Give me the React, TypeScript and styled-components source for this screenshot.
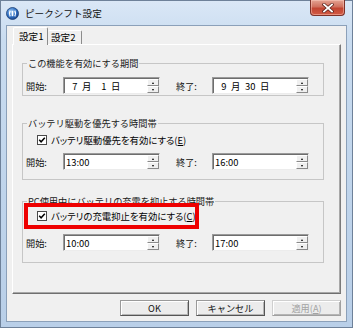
import styled, { createGlobalStyle } from "styled-components"

const GlobalStyle = createGlobalStyle`
  html, body {
    margin: 0;
    padding: 0;
    background: #ffffff;
  }
  body {
    font-family: "Noto Sans CJK JP", "Noto Sans", sans-serif;
    color: #000;
  }
`

/////////////////////////////////////////////////////////////////////////////

const TitleIcon = () => (
  <svg width="13" height="13" viewBox="0 0 13 13">
    <defs>
      <radialGradient id="ic" cx="40%" cy="35%" r="70%">
        <stop offset="0%" stopColor="#9cc8f4" />
        <stop offset="60%" stopColor="#2f6fc2" />
        <stop offset="100%" stopColor="#173f86" />
      </radialGradient>
    </defs>
    <circle cx="6.5" cy="6.5" r="6" fill="url(#ic)" stroke="#1d3f73" strokeWidth="0.8" />
    <path d="M4.2 3.6 Q2.6 6.5 4.2 9.4" stroke="#fff" strokeWidth="1.3" fill="none" />
    <path d="M8.8 3.6 Q10.4 6.5 8.8 9.4" stroke="#fff" strokeWidth="1.3" fill="none" />
    <rect x="5.7" y="3.8" width="1.6" height="5.4" fill="#fff" />
  </svg>
)

const CloseGlyph = () => (
  <svg width="12" height="10" viewBox="0 0 12 10">
    <path d="M2 1.5 L10 8.5 M10 1.5 L2 8.5" stroke="#5a2019" strokeWidth="3.2" strokeLinecap="square" />
    <path d="M2 1.5 L10 8.5 M10 1.5 L2 8.5" stroke="#ffffff" strokeWidth="1.8" strokeLinecap="square" />
  </svg>
)

const CheckGlyph = () => (
  <svg width="10" height="10" viewBox="0 0 10 10">
    <rect x="0.5" y="0.5" width="9" height="9" fill="#fff" stroke="#4a4a4a" />
    <path d="M2.2 4.8 L4.1 6.8 L7.8 2.8" stroke="#000" strokeWidth="1.5" fill="none" />
  </svg>
)

const Spin = ({ value, date }: { value: string; date?: boolean }) => (
  <SpinBox>
    <SpinValue $date={date}>{value}</SpinValue>
    <SpinButtons>
      <SpinButton>
        <Arrow $up />
      </SpinButton>
      <SpinButton>
        <Arrow />
      </SpinButton>
    </SpinButtons>
  </SpinBox>
)

const Period = ({ start, end, date }: { start: string; end: string; date?: boolean }) => (
  <FieldRow>
    <FieldLabel>開始:</FieldLabel>
    <Spin value={start} date={date} />
    <span />
    <FieldLabel>終了:</FieldLabel>
    <Spin value={end} date={date} />
  </FieldRow>
)

const FIG = "\u2007"

const App = () => {
  return (
    <>
      <GlobalStyle />
      <Window>
        <TitleBar>
          <TitleIcon />
          <TitleText>ピークシフト設定</TitleText>
          <CloseButton>
            <CloseGlyph />
          </CloseButton>
        </TitleBar>

        <Client>
          <TabStrip>
            <Tab $active>設定1</Tab>
            <Tab>設定2</Tab>
          </TabStrip>

          <Panel>
            <Group $top={0} $padTop={8} $padBottom={1}>
              <Legend>この機能を有効にする期間</Legend>
              <Period date start={`${FIG}7 月 ${FIG}1 日`} end={`${FIG}9 月 30 日`} />
            </Group>

            <Group $top={21} $padTop={5} $padBottom={9}>
              <Legend>バッテリ駆動を優先する時間帯</Legend>
              <CheckRow>
                <CheckGlyph />
                <span>
                  バッテリ駆動優先を有効にする(<u>E</u>)
                </span>
              </CheckRow>
              <Period start="13:00" end="16:00" />
            </Group>

            <Group $top={15} $padTop={3} $padBottom={11}>
              <Legend>PC使用中にバッテリの充電を抑止する時間帯</Legend>
              <CheckRow $gap={12}>
                <CheckGlyph />
                <span>
                  バッテリの充電抑止を有効にする(<u>C</u>)
                </span>
                <Highlight />
              </CheckRow>
              <Period start="10:00" end="17:00" />
            </Group>
          </Panel>

          <ButtonRow>
            <DialogButton>OK</DialogButton>
            <DialogButton>キャンセル</DialogButton>
            <DialogButton $disabled>
              適用(<u>A</u>)
            </DialogButton>
          </ButtonRow>
        </Client>
      </Window>
    </>
  )
}

/////////////////////////////////////////////////////////////////////////////

const Window = styled.div`
  width: 353px;
  height: 328px;
  box-sizing: border-box;
  display: flex;
  flex-direction: column;
  border: 1px solid #6e8199;
  padding: 0 5px 5px;
  background: linear-gradient(180deg, #dae7f6 0%, #c9dcf0 12%, #bfd4eb 60%, #b9cfe8 100%);
`

const TitleBar = styled.div`
  height: 24px;
  display: flex;
  align-items: center;
  gap: 6px;
`

const TitleText = styled.span`
  font-size: 9.6px;
  line-height: 12px;
  flex: 1;
  color: #111;
`

const CloseButton = styled.div`
  align-self: flex-start;
  width: 35px;
  height: 16px;
  margin-right: 2px;
  margin-top: -1px;
  box-sizing: border-box;
  display: flex;
  align-items: center;
  justify-content: center;
  border: 1px solid #7d3128;
  border-top: none;
  border-radius: 0 0 4px 4px;
  background: linear-gradient(180deg, #e4a493 0%, #d0705e 45%, #c24532 55%, #d35b44 100%);
  box-shadow: inset 0 0 0 1px rgba(255, 210, 200, 0.45);
`

const Client = styled.div`
  flex: 1;
  display: flex;
  flex-direction: column;
  background: #f0f0f0;
  border: 1px solid #8ba0b9;
  padding: 0 5px 5px 5px;
`

const TabStrip = styled.div`
  height: 18px;
  display: flex;
  align-items: flex-end;
  padding-left: 1px;
`

const Tab = styled.div<{ $active?: boolean }>`
  position: relative;
  z-index: ${({ $active }) => ($active ? 2 : 1)};
  box-sizing: border-box;
  height: ${({ $active }) => ($active ? "18px" : "14px")};
  width: ${({ $active }) => ($active ? "35px" : "34px")};
  margin-bottom: ${({ $active }) => ($active ? "-1px" : "0")};
  display: flex;
  align-items: ${({ $active }) => ($active ? "center" : "flex-start")};
  padding-left: ${({ $active }) => ($active ? "5px" : "3px")};
  padding-bottom: ${({ $active }) => ($active ? "1px" : "0")};
  font-size: 9.6px;
  line-height: 12px;
  background: #f0f0f0;
  border-top: 1px solid #ffffff;
  border-left: ${({ $active }) => ($active ? "1px solid #ffffff" : "none")};
  border-right: 1px solid #8c8c8c;
  border-radius: 2px 2px 0 0;
`

const Panel = styled.div`
  height: 250px;
  box-sizing: border-box;
  display: flex;
  flex-direction: column;
  padding: 12px 16px 0 9px;
  border: 1px solid;
  border-color: #ffffff #7a7a7a #6f6f6f #ffffff;
  box-shadow: inset -1px -1px 0 #a8a8a8;
`

const Group = styled.fieldset<{ $top: number; $padTop: number; $padBottom: number }>`
  margin: ${({ $top }) => $top}px 0 0 0;
  padding: ${({ $padTop }) => $padTop}px 0 ${({ $padBottom }) => $padBottom}px 0;
  border: 1px solid #c6c6c6;
  min-inline-size: 0;
  display: flex;
  flex-direction: column;
`

const Legend = styled.legend`
  font-size: 9.2px;
  line-height: 12px;
  padding: 0 1px;
  margin-left: 4px;
  color: #1a1a1a;
`

const CheckRow = styled.div<{ $gap?: number }>`
  position: relative;
  height: 12px;
  display: flex;
  align-items: center;
  gap: 4px;
  padding-left: 14px;
  margin-bottom: ${({ $gap }) => $gap ?? 7}px;
  font-size: 9.4px;
  line-height: 12px;
  white-space: nowrap;
  font-feature-settings: "palt";

  u {
    text-underline-offset: 1px;
  }
`

const Highlight = styled.span`
  position: absolute;
  left: 1px;
  top: -7px;
  width: 175px;
  height: 26px;
  box-sizing: border-box;
  border: 4px solid #ee0000;
  pointer-events: none;
`

const FieldRow = styled.div`
  display: grid;
  grid-template-columns: 37px 97px 16px 36px 97px;
  align-items: center;
  padding-left: 3px;
`

const FieldLabel = styled.span`
  font-size: 9.2px;
  line-height: 12px;
  color: #111;
`

const SpinBox = styled.div`
  height: 17px;
  box-sizing: border-box;
  display: flex;
  background: #ffffff;
  border: 1px solid;
  border-color: #9a9a9a #ececec #ececec #9a9a9a;
  box-shadow: inset 1px 1px 0 #6d6d6d;
`

const SpinValue = styled.span<{ $date?: boolean }>`
  flex: 1;
  padding: 1px 0 0 ${({ $date }) => ($date ? "3px" : "2px")};
  font-size: 9.4px;
  line-height: 14px;
  white-space: pre;
  word-spacing: ${({ $date }) => ($date ? "2.5px" : "0")};
`

const SpinButtons = styled.div`
  width: 12px;
  display: flex;
  flex-direction: column;
  padding: 1px 0 0 0;
`

const SpinButton = styled.div`
  flex: 1;
  display: flex;
  align-items: center;
  justify-content: center;
  background: #f0f0f0;
  border: 1px solid;
  border-color: #ffffff #8a8a8a #8a8a8a #ffffff;
`

const Arrow = styled.span<{ $up?: boolean }>`
  width: 0;
  height: 0;
  border-left: 1.5px solid transparent;
  border-right: 1.5px solid transparent;
  ${({ $up }) => ($up ? "border-bottom: 2px solid #000;" : "border-top: 2px solid #000;")}
`

const ButtonRow = styled.div`
  margin-top: 6px;
  display: flex;
  justify-content: flex-end;
  gap: 7px;
`

const DialogButton = styled.div<{ $disabled?: boolean }>`
  width: 69px;
  height: 16px;
  box-sizing: border-box;
  display: flex;
  align-items: center;
  justify-content: center;
  font-size: 9.2px;
  line-height: 12px;
  color: ${({ $disabled }) => ($disabled ? "#a3a3a3" : "#111")};
  background: #ececec;
  border: 1px solid;
  border-color: ${({ $disabled }) =>
    $disabled ? "#cfcfcf #a0a0a0 #a0a0a0 #cfcfcf" : "#9a9a9a #555555 #555555 #9a9a9a"};
  box-shadow: inset 1px 1px 0 #ffffff, inset -1px -1px 0 #b5b5b5;

  u {
    text-underline-offset: 1px;
  }
`

export default App
